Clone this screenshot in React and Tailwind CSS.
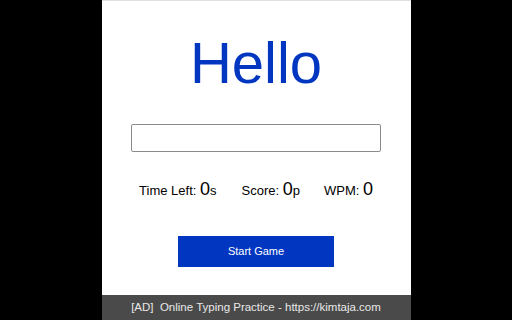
export default function App() {
  return (
    <div className="w-[512px] h-[320px] bg-black flex justify-center font-['Liberation_Sans',Arial,sans-serif]">
      <div className="w-[309px] h-full bg-white border-t border-[#e0e0e0] flex flex-col items-center">
        <h1 className="mt-[27px] h-[70px] leading-[70px] text-[58px] text-[#0036c0]">Hello</h1>
        <input
          type="text"
          className="mt-[26px] w-[250px] h-[28px] border border-[#8a8a8a] rounded-[2px] outline-none"
        />
        <div className="mt-[24px] flex items-baseline text-[13px] text-black">
          <span>Time Left: <span className="text-[18px]">0</span>s</span>
          <span className="ml-[25px]">Score: <span className="text-[18px]">0</span>p</span>
          <span className="ml-[24px]">WPM: <span className="text-[18px]">0</span></span>
        </div>
        <button className="mt-[33px] w-[156px] h-[31px] bg-[#0036c0] text-white text-[11px]">
          Start Game
        </button>
        <div className="mt-auto w-full h-[25px] bg-[#4a4a4a] text-[#e8e8e8] text-[11.5px] flex items-center justify-center whitespace-pre">
          [AD]  Online Typing Practice - https://kimtaja.com
        </div>
      </div>
    </div>
  );
}
